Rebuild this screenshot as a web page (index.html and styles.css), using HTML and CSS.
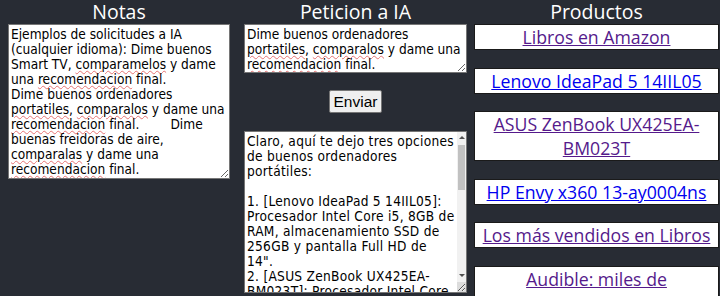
FILE: index.html
```html
<!DOCTYPE html>
<html lang="es">
<head>
<meta charset="utf-8">
<title>Notas</title>
<link rel="stylesheet" href="styles.css">
</head>
<body>
<main class="app">
  <section class="col col-notes">
    <h2 class="title">Notas</h2>
    <div class="field field-notes">Ejemplos de solicitudes a IA (cualquier idioma): Dime buenos Smart TV, <span class="sp">comparamelos</span> y dame una <span class="sp">recomendacion</span> final.
Dime buenos ordenadores <span class="sp">portatiles</span>, <span class="sp">comparalos</span> y dame una <span class="sp">recomendacion</span> final.        Dime buenas freidoras de aire, <span class="sp">comparalas</span> y dame una <span class="sp">recomendacion</span> final.</div>
  </section>
  <section class="col col-request">
    <h2 class="title">Peticion a IA</h2>
    <div class="field field-prompt">Dime buenos ordenadores <span class="sp">portatiles</span>, <span class="sp">comparalos</span> y dame una <span class="sp">recomendacion</span> final.</div>
    <div class="send-row"><button class="send">Enviar</button></div>
    <div class="field field-answer">
      <div class="answer-text">Claro, aquí te dejo tres opciones de buenos ordenadores portátiles:

1. [Lenovo IdeaPad 5 14IIL05]: Procesador Intel Core i5, 8GB de RAM, almacenamiento SSD de 256GB y pantalla Full HD de 14".
2. [ASUS ZenBook UX425EA-BM023T]: Procesador Intel Core i7, 16GB de RAM, almacenamiento SSD de 512GB y pantalla Full HD de 14".
3. [HP Envy x360 13-ay0004ns]: Procesador AMD Ryzen 7, 16GB de RAM, almacenamiento SSD de 512GB y pantalla táctil Full HD de 13,3".

Mi recomendación final sería el ASUS ZenBook.</div>
      <div class="scrollbar" aria-hidden="true">
        <div class="sb-btn sb-up"></div>
        <div class="sb-track"><div class="sb-thumb"></div></div>
        <div class="sb-btn sb-down"></div>
        <div class="sb-corner"></div>
      </div>
    </div>
  </section>
  <section class="col col-products">
    <h2 class="title">Productos</h2>
    <ul class="products">
      <li class="product"><a class="visited" href="#">Libros en Amazon</a></li>
      <li class="product"><a class="fresh" href="#">Lenovo IdeaPad 5 14IIL05</a></li>
      <li class="product"><a class="visited" href="#">ASUS ZenBook UX425EA-BM023T</a></li>
      <li class="product"><a class="fresh" href="#">HP Envy x360 13-ay0004ns</a></li>
      <li class="product"><a class="visited" href="#">Los más vendidos en Libros</a></li>
      <li class="product"><a class="visited" href="#">Audible: miles de audiolibros y podcasts</a></li>
    </ul>
  </section>
</main>
</body>
</html>
```

FILE: styles.css
```css
html, body {
  margin: 0;
  padding: 0;
  background: #282c34;
  overflow: hidden;
}
body {
  height: 296px;
}
.app {
  display: grid;
  grid-template-columns: 222px 223px 238px;
  column-gap: 14px;
  padding: 0 8px;
  align-items: start;
}
.col-products {
  margin-left: -7px;
}
.col {
  display: flex;
  flex-direction: column;
  min-width: 0;
}
.title {
  margin: 0;
  height: 24px;
  line-height: 24px;
  font-family: "Open Sans", "Noto Sans", sans-serif;
  font-weight: 400;
  font-size: 19.5px;
  color: #ffffff;
  text-align: center;
}
.field {
  box-sizing: border-box;
  background: #ffffff;
  border: 1px solid #767676;
  padding: 2px;
  font-family: "DejaVu Sans Condensed", "DejaVu Sans", sans-serif;
  font-size: 13.6px;
  line-height: 15px;
  color: #000000;
  white-space: pre-wrap;
  overflow-wrap: break-word;
  resize: both;
  overflow: hidden;
}
.field-notes {
  height: 155px;
}
.field-prompt {
  height: 49px;
}
.field-answer {
  height: 162px;
  padding: 0;
  display: flex;
  white-space: normal;
}
.field-answer .answer-text {
  flex: 1;
  min-width: 0;
  padding: 2px 0 2px 2px;
  font-size: 13.6px;
  letter-spacing: 0.28px;
  white-space: pre-wrap;
  overflow: hidden;
}
.scrollbar {
  width: 9px;
  flex: none;
  display: flex;
  flex-direction: column;
  background: #f1f1f1;
}
.sb-btn {
  height: 12px;
  flex: none;
  position: relative;
}
.sb-up::after,
.sb-down::after {
  content: "";
  position: absolute;
  left: 2px;
  top: 4px;
  border-left: 3px solid transparent;
  border-right: 3px solid transparent;
}
.sb-up::after {
  border-bottom: 3px solid #505050;
}
.sb-down::after {
  border-top: 3px solid #505050;
}
.sb-track {
  flex: 1;
  padding: 1px 1px 0;
}
.sb-thumb {
  height: 45px;
  background: #c1c1c1;
}
.sb-corner {
  height: 10px;
  flex: none;
  background: #dcdcdc;
}
.sp {
  text-decoration: underline wavy #e57373;
  text-decoration-thickness: 1px;
  text-underline-offset: 1px;
}
.send-row {
  display: flex;
  justify-content: center;
  padding: 17px 0 18px;
}
.send {
  font-family: "Liberation Sans", Arial, sans-serif;
  font-size: 15.5px;
  line-height: 18px;
  padding: 1px 4px;
  background: #efefef;
  color: #000;
  border: 1px solid #767676;
  border-radius: 2px;
  height: 23px;
}
.products {
  list-style: none;
  margin: 0;
  padding: 0;
  display: flex;
  flex-direction: column;
  gap: 17.5px;
}
.product {
  background: #ffffff;
  border: 1px solid #1a1a1a;
  padding: 0 3px;
  text-align: center;
  font-family: "Open Sans", "Noto Sans", sans-serif;
  font-size: 17.7px;
  line-height: 24px;
}
.product a {
  text-decoration: underline;
}
.visited {
  color: #551a8b;
}
.fresh {
  color: #0000ee;
}
```
